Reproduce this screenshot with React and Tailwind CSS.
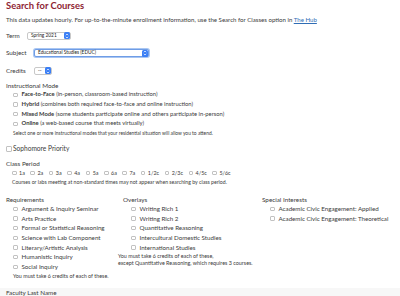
import React from "react";

const Box = ({ className = "w-[4.5px] h-[4.5px]" }) => (
  <span
    className={`inline-block shrink-0 rounded-[1px] border-[0.5px] border-[#c2c2c2] bg-white ${className}`}
  />
);

const Stepper = () => (
  <span className="flex items-center justify-center w-[6px] h-[7px] rounded-[1.5px] bg-[#3b7ff5]">
    <svg width="4" height="6" viewBox="0 0 4 6" fill="none">
      <path d="M0.8 2.2 L2 1 L3.2 2.2" stroke="white" strokeWidth="0.7" />
      <path d="M0.8 3.8 L2 5 L3.2 3.8" stroke="white" strokeWidth="0.7" />
    </svg>
  </span>
);

const Select = ({ value, width, focus }) => (
  <div
    className={`flex items-center justify-between h-[8px] rounded-[2px] bg-white pl-[3px] pr-[0.5px] text-[4.8px] text-[#222] ${
      focus
        ? "border-[0.5px] border-[#6f9de6] shadow-[0_0_0_1px_#a9c6f2]"
        : "border-[0.5px] border-[#c8c8c8]"
    }`}
    style={{ width }}
  >
    <span>{value}</span>
    <Stepper />
  </div>
);

const Check = ({ children }) => (
  <div className="flex items-center h-[9.67px] gap-[4px]">
    <Box />
    <span className="whitespace-nowrap">{children}</span>
  </div>
);

const modes = [
  ["Face-to-Face", "(in-person, classroom-based instruction)"],
  ["Hybrid", "(combines both required face-to-face and online instruction)"],
  ["Mixed Mode", "(some students participate online and others participate in-person)"],
  ["Online", "(a web-based course that meets virtually)"],
];

const periods = ["1a", "2a", "3a", "4a", "5a", "6a", "7a", "1/2c", "2/3c", "4/5c", "5/6c"];

const requirements = [
  "Argument & Inquiry Seminar",
  "Arts Practice",
  "Formal or Statistical Reasoning",
  "Science with Lab Component",
  "Literary/Artistic Analysis",
  "Humanistic Inquiry",
  "Social Inquiry",
];

const overlays = [
  "Writing Rich 1",
  "Writing Rich 2",
  "Quantitative Reasoning",
  "Intercultural Domestic Studies",
  "International Studies",
];

const interests = [
  "Academic Civic Engagement: Applied",
  "Academic Civic Engagement: Theoretical",
];

export default function App() {
  return (
    <div className="w-[400px] h-[296px] overflow-hidden bg-white text-[#3a3a3a] font-['Lato','Liberation_Sans',sans-serif]">
      <div className="px-[6px]">
        <h1 className="pt-[1px] h-[11px] leading-[10px] text-[9.4px] font-bold text-[#8e2433]">
          Search for Courses
        </h1>
        <p className="mt-[4px] h-[9px] leading-[9px] text-[6.1px]">
          This data updates hourly. For up-to-the-minute enrollment information, use the Search
          for Classes option in{" "}
          <a className="text-[#2f6db5] underline" href="#">
            The Hub
          </a>
        </p>

        <div className="mt-[7px] flex items-center h-[9px] text-[6.3px]">
          <span className="w-[21px]">Term</span>
          <Select value="Spring 2021" width="44px" />
        </div>
        <div className="mt-[8.5px] flex items-center h-[9px] text-[6.3px]">
          <span className="w-[28px]">Subject</span>
          <Select value="Educational Studies (EDUC)" width="115px" focus />
        </div>
        <div className="mt-[8.5px] flex items-center h-[9px] text-[6.3px]">
          <span className="w-[28px]">Credits</span>
          <Select value="--" width="18px" />
        </div>

        <div className="mt-[7px] h-[8px] leading-[8px] text-[6.3px]">Instructional Mode</div>
        <div className="pl-[7px] text-[5.8px]">
          {modes.map(([name, desc]) => (
            <Check key={name}>
              <span className="font-bold">{name}</span> {desc}
            </Check>
          ))}
          <div className="h-[8px] leading-[8px] text-[4.9px] whitespace-nowrap">
            Select one or more instructional modes that your residential situation will allow you
            to attend.
          </div>
        </div>

        <div className="mt-[8.4px] flex items-center gap-[1.5px] h-[8px] text-[6.6px]">
          <Box className="w-[5.5px] h-[5.5px]" />
          <span>Sophomore Priority</span>
        </div>

        <div className="mt-[7.3px] h-[8px] leading-[8px] text-[6.3px]">Class Period</div>
        <div className="pl-[6px] text-[5.4px]">
          <div className="flex items-center h-[9.7px] gap-[5.6px]">
            {periods.map((p) => (
              <div key={p} className="flex items-center gap-[2.5px]">
                <Box />
                <span>{p}</span>
              </div>
            ))}
          </div>
          <div className="h-[8px] leading-[8px] text-[5.2px] whitespace-nowrap">
            Courses or labs meeting at non-standard times may not appear when searching by class
            period.
          </div>
        </div>

        <div className="mt-[10px] flex">
          <div className="w-[112px]">
            <div className="h-[8px] leading-[8px] text-[6.3px]">Requirements</div>
            <div className="pl-[7px] text-[6.2px]">
              {requirements.map((r) => (
                <Check key={r}>{r}</Check>
              ))}
              <div className="h-[8px] leading-[8px] text-[5.4px] whitespace-nowrap">
                You must take 6 credits of each of these.
              </div>
            </div>
          </div>
          <div className="w-[144px]">
            <div className="pl-[5px] h-[8px] leading-[8px] text-[6.3px]">Overlays</div>
            <div className="text-[6.2px]">
              <div className="pl-[13px]">
                {overlays.map((r) => (
                  <Check key={r}>{r}</Check>
                ))}
              </div>
              <div className="text-[5.4px] leading-[7.7px] pt-[0.5px] whitespace-nowrap">
                You must take 6 credits of each of these,
                <br />
                except Quantitative Reasoning, which requires 3 courses.
              </div>
            </div>
          </div>
          <div>
            <div className="h-[8px] leading-[8px] text-[6.3px]">Special Interests</div>
            <div className="pl-[8px] text-[6.2px]">
              {interests.map((r) => (
                <Check key={r}>{r}</Check>
              ))}
            </div>
          </div>
        </div>
      </div>
      <div className="mt-[8px] bg-[#f7f7f7] px-[6px] pt-[1px] h-[20px] leading-[8px] text-[6.3px]">
        Faculty Last Name
      </div>
    </div>
  );
}
